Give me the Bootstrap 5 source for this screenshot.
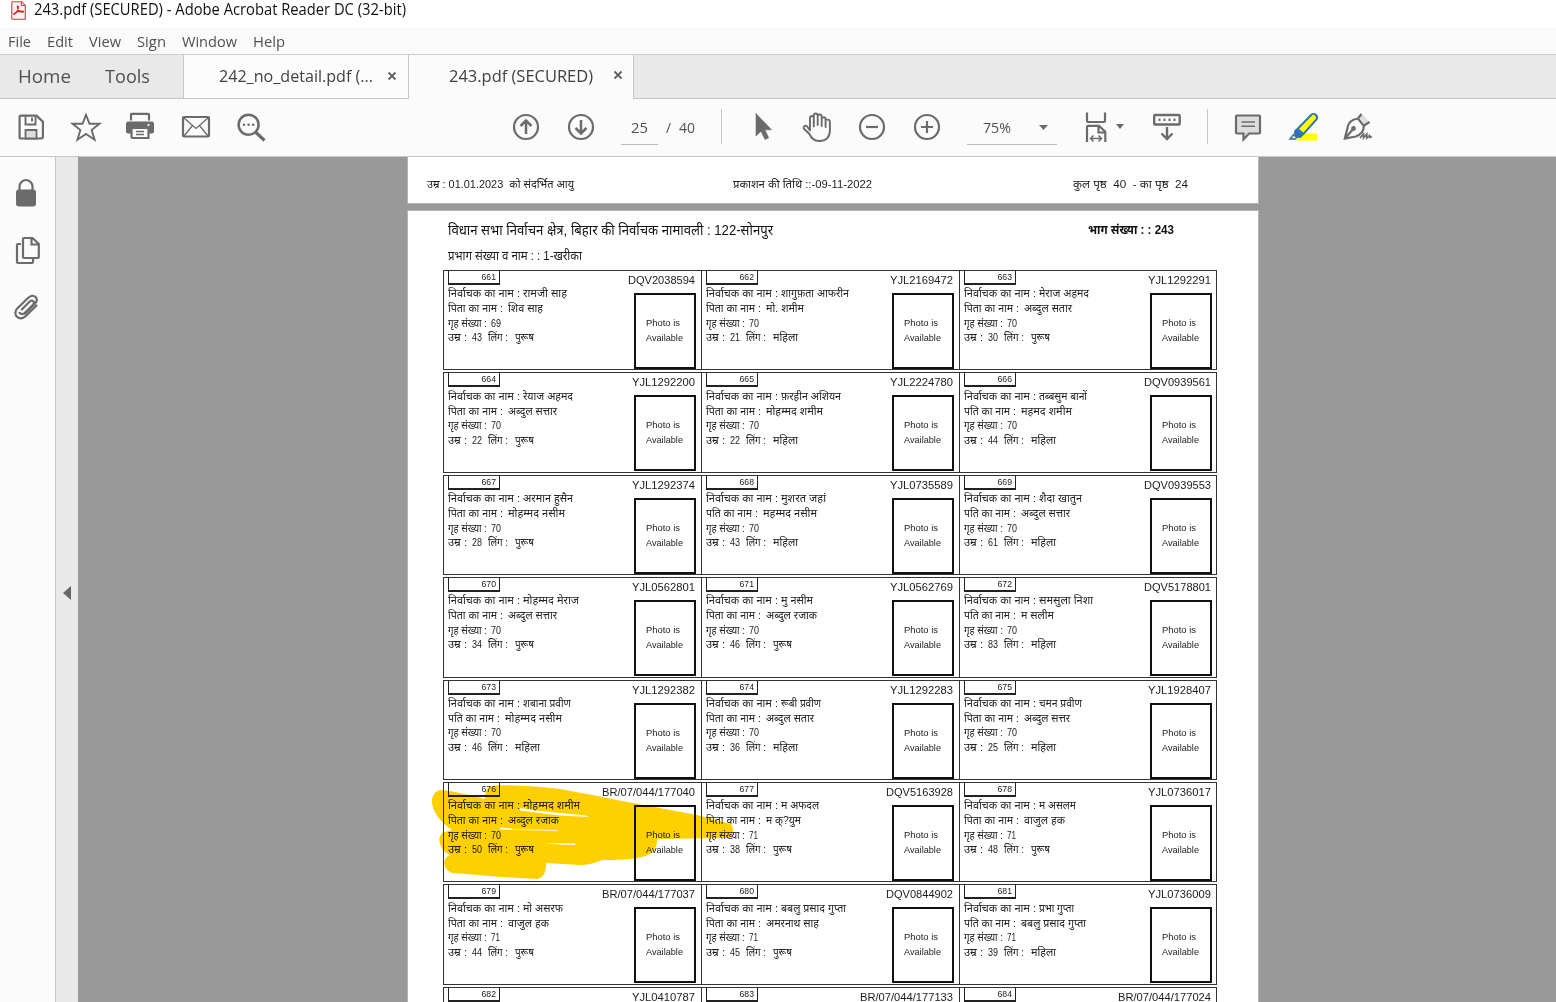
<!DOCTYPE html>
<html lang="hi">
<head>
<meta charset="utf-8">
<title>243.pdf (SECURED) - Adobe Acrobat Reader DC (32-bit)</title>
<link href="https://cdn.jsdelivr.net/npm/bootstrap@5.3.0/dist/css/bootstrap.min.css" rel="stylesheet">
<style>
html,body{height:100%;overflow:hidden}
body{font-family:"Open Sans","Noto Sans",sans-serif;background:#fff;color:#505050;line-height:1}
svg{display:block;overflow:visible;flex:none}
.fit{display:inline-block;white-space:pre;flex:none}
.fit>i{display:inline-block;font-style:normal;transform-origin:0 50%;white-space:pre}
.titlebar{height:28px;padding:0 0 8px 11px;color:#111;font-size:15.5px}
.titlebar .fit{margin-left:8px}
.menubar{height:27px;background:#fafafa;border-bottom:1px solid #cbcbcb;font-size:14px;padding:2px 0 0 8px}
.menubar .fit{margin-right:16px}
.tabstrip{height:44px;background:#e9e9e9;border-bottom:1px solid #c6c6c6}
.homes{width:183px;padding-left:18px;font-size:19px;gap:34px}
.doctab{width:225px;height:43px;background:#fcfcfc;border-right:1px solid #c6c6c6;font-size:16.5px;color:#404040}
.doctab.first{border-left:1px solid #c6c6c6;width:226px;padding-left:35px}
.doctab.current{height:44px;background:#fbfbfb;padding:0 0 2px 40px}
.doctab svg{margin:-2px 0 0 15px}
.doctab.current svg{margin-left:21px}
.toolbar{height:58px;background:#fbfbfb;border-bottom:1px solid #c6c6c6;padding:0 0 2px 17px;font-size:14px}
.tools{gap:27px}
.vline{width:1px;height:35px;background:#c6c6c6}
.field{height:35px;margin-top:1px;padding-top:2px;border-bottom:1px solid #bdbdbd}
#pager{margin-left:247px}
#pageno{margin-left:26px;width:37px;padding-left:10px}
#pagetotal{margin:3px 0 0 8px}
#rule1{margin-left:26px}
#nav2{margin-left:26px}
#zoomer{margin-left:26px;width:90px;padding-left:16px;gap:28px}
#fitter{margin-left:26px;gap:5px}
#keys{margin-left:29px}
#rule2{margin-left:26px}
#annot{margin-left:26px}
.siderail{width:56px;background:#fbfbfb;border-right:1px solid #c6c6c6;padding:21px 0 0 12px;gap:29px}
.collapser{width:22px;background:#e9e9e9}
.canvas{background:#999;padding-left:330px}
.sheet{width:850px;background:#fff;color:#1c1c1c;font-family:"Liberation Sans","Noto Sans","Noto Sans Devanagari",sans-serif;box-shadow:0 0 0 1px #b4b4b4}
.sheet.previous{height:46px;margin-bottom:8px;padding:22px 0 0 19px;font-size:11.5px}
.sheet.present{height:792px;padding:6px 0 0 35px}
.heading{height:25px;font-size:14px;padding:0 84px 0 5px;color:#111}
.heading b{font-size:12px}
.subheading{height:28px;font-size:12px;padding-left:5px}
.rolls{display:grid;grid-template-columns:259px 258px 257px;grid-auto-rows:100.4px;row-gap:2px}
.voter{border:1px solid #333;border-left:0}
.voter:nth-child(3n+1){border-left:1px solid #333}
.voter .serial{width:52px;height:14px;border:1px solid #222;border-top:0;border-bottom-width:2px;margin-left:4px;padding:2px 3px 0 0;text-align:right;font-size:8.7px;line-height:9px}
.voter .epic{font-size:11.8px;line-height:12px;padding:3px 6px 0 0}
.facts{margin-left:4px;font-size:10.5px;color:#222}
.facts>div{height:15px;display:flex;align-items:center}
.facts>div:nth-child(3){height:14px}
.photo{width:62px;height:76px;border:2px solid #111;margin-right:5px;margin-top:7px;font-size:9px;line-height:15px;padding:21px 0 0 10px}
.voter:nth-child(3n) .photo{margin-right:4px}
.voter:nth-child(3n) .epic{padding-right:5px}
.marker{position:absolute;left:0;top:0;mix-blend-mode:multiply;pointer-events:none}
</style>
<script src="https://cdn.jsdelivr.net/npm/bootstrap@5.3.0/dist/js/bootstrap.bundle.min.js"></script>
</head>
<body class="d-flex flex-column">
<header>
  <div class="titlebar d-flex align-items-center">
    <svg width="15" height="19" viewBox="0 0 15 19"><path d="M1.5.7h9l3.8 3.7v13.9H1.5Q.8 18.3.8 17.5V1.5Q.8.7 1.5.7zM10.4.7v3.8h3.8" fill="#fdf4f3" stroke="#c9403c" stroke-width="1.1"/><path d="M3.3 13.2c2-1 4-4.500 4-7.200 0-1-.9-1-.9 0 .1 3 2.500 5.200 5.300 5.200 1 0 1-1 0-1-3 0-6.300.8-8.300 2-.8.6-.6 1.300-.1 1z" fill="none" stroke="#c62c28" stroke-width="1.3"/></svg>
    <span class="fit" data-w="372">243.pdf (SECURED) - Adobe Acrobat Reader DC (32-bit)</span>
  </div>
  <nav class="menubar d-flex align-items-center">
    <span class="fit" data-w="23">File</span><span class="fit" data-w="26">Edit</span><span class="fit" data-w="32">View</span><span class="fit" data-w="29">Sign</span><span class="fit" data-w="55">Window</span><span class="fit" data-w="32">Help</span>
  </nav>
  <div class="tabstrip d-flex">
    <div class="homes d-flex align-items-center"><span class="fit" data-w="53">Home</span><span class="fit" data-w="45">Tools</span></div>
    <div class="doctab first d-flex align-items-center"><span class="fit" data-w="154">242_no_detail.pdf (...</span>
      <svg width="8" height="8"><path d="M.5.5l7 7M7.500.5l-7 7" stroke="#606060" stroke-width="1.8"/></svg></div>
    <div class="doctab current d-flex align-items-center"><span class="fit" data-w="144">243.pdf (SECURED)</span>
      <svg width="8" height="8"><path d="M.5.5l7 7M7.500.5l-7 7" stroke="#606060" stroke-width="1.8"/></svg></div>
  </div>
  <div class="toolbar d-flex align-items-center">
    <div class="tools d-flex">
      <svg width="28" height="28" fill="none" stroke="#6b6b6b" stroke-width="2.200"><path d="M4 2.600h15.500l6.400 6.200v14.700q0 2-2 2H4q-1.400 0-1.400-1.500V4q0-1.400 1.400-1.400z"/><path d="M8.500 3v8.500h10V3M15 4.500v4" stroke-width="1.900"/><path d="M8.500 25.500v-8.500h11v8.500z" fill="#ddd" stroke-width="1.800"/></svg>
      <svg width="28" height="28" fill="none" stroke="#6b6b6b" stroke-width="1.900"><path d="M14 1.800l3.500 9h10l-7.900 6.300 3 9.600L14 21l-8.600 5.700 3-9.600L.5 10.800h10z"/></svg>
      <svg width="28" height="28" viewBox="1 0 28 28"><path d="M5 7.500V1.500Q5 .8 6 .8h16q1 0 1 .8v5.900" fill="none" stroke="#6b6b6b" stroke-width="2.200"/><path d="M2 8.500h24q2 0 2 2v8q0 2-2 2H2q-2 0-2-2v-8q0-2 2-2z" fill="#6b6b6b"/><path d="M5.500 14.800h17v10.200H7q-1.500 0-1.500-1.500z" fill="#fbfbfb" stroke="#6b6b6b" stroke-width="2.200"/><path d="M10 18.500h8M10 21.500h8" stroke="#6b6b6b" stroke-width="1.300"/><circle cx="22.500" cy="12" r="1.200" fill="#ddd"/></svg>
      <svg width="28" height="28" fill="none" stroke="#6b6b6b" stroke-width="2.200"><rect x="1" y="4" width="26" height="19.500" rx="1"/><path d="M2 5l12 10.500L26 5M2 23l8.500-10.500M26 23l-8.500-10.500" stroke-width="1.300"/></svg>
      <svg width="28" height="28" fill="none" stroke="#6b6b6b"><circle cx="11.600" cy="11.800" r="10" stroke-width="2.500"/><path d="M19 19.500l8.500 8" stroke-width="3.200"/><g fill="#6b6b6b" stroke="none"><circle cx="7" cy="11.800" r="1.300"/><circle cx="11.600" cy="11.800" r="1.300"/><circle cx="16.200" cy="11.800" r="1.300"/></g></svg>
    </div>
    <div class="tools d-flex" id="pager">
      <svg width="28" height="28" fill="none" stroke="#6b6b6b" stroke-width="2.200"><circle cx="14" cy="14" r="12"/><path d="M14 21V8M8.500 13L14 7.500l5.500 5.500" stroke-width="2.500"/></svg>
      <svg width="28" height="28" fill="none" stroke="#6b6b6b" stroke-width="2.200"><circle cx="14" cy="14" r="12"/><path d="M14 7v13M8.500 15l5.500 5.500 5.500-5.500" stroke-width="2.500"/></svg>
    </div>
    <div class="field d-flex align-items-center" id="pageno"><span class="fit" data-w="17">25</span></div>
    <div id="pagetotal" class="d-flex"><span class="fit" data-w="5">/</span><span class="fit ms-2" data-w="16">40</span></div>
    <div class="vline" id="rule1"></div>
    <div class="tools d-flex" id="nav2">
      <svg width="28" height="28"><path d="M8 .5v22.500l5-4.700 4 8.200 3.700-1.700-3.800-8h6.600z" fill="#6b6b6b" stroke="#6b6b6b" stroke-width=".6"/></svg>
      <svg width="28" height="28" fill="none" stroke="#6b6b6b" stroke-width="1.900" stroke-linejoin="round" stroke-linecap="round"><path d="M7 16.500V5q0-2 1.900-2t1.900 2v8.500M10.800 12V2.500q0-2 1.900-2t2 2V12M14.700 3.500q0-2 2-2t2 2V13M18.700 6q.2-1.700 2-1.700t1.900 2L24.600 6.600q2.300 0 2.300 2.400V17c0 7-4 11-11 11-5 0-7.500-2.500-9.500-7L.8 15.500C0 13.500 2 12 4 13.200l3 4.300M22.600 6v8"/></svg>
      <svg width="28" height="28" fill="none" stroke="#6b6b6b" stroke-width="2.200"><circle cx="14" cy="14" r="12"/><path d="M8 14h12"/></svg>
      <svg width="28" height="28" fill="none" stroke="#6b6b6b" stroke-width="2.200"><circle cx="14" cy="14" r="12"/><path d="M8 14h12M14 8v12"/></svg>
    </div>
    <div class="field d-flex align-items-center" id="zoomer"><span class="fit" data-w="28">75%</span><svg width="9" height="5"><path d="M0 0h9L4.500 5z" fill="#6b6b6b"/></svg></div>
    <div class="d-flex align-items-center" id="fitter">
      <svg width="28" height="28" fill="none" stroke="#6b6b6b" stroke-width="2.200"><path d="M4 -.5v8.500q0 1 1 1h16q1 0 1-1V-.5M4 29V14q0-1.200 1.200-1.200H16l6.300 6V29M15.500 13v6.500H22"/><path d="M7.500 25.500h11M10.500 22.500l-3 3 3 3M15.500 22.500l3 3-3 3" stroke-width="1.500"/></svg>
      <svg width="8" height="5"><path d="M0 0h8L4 5z" fill="#6b6b6b"/></svg>
    </div>
    <svg id="keys" width="28" height="28" fill="none" stroke="#6b6b6b" stroke-width="2.400"><rect x="1.200" y="2" width="25.500" height="9.500" rx="1"/><path d="M5.500 6.800h18" stroke-dasharray="2 3"/><path d="M14 14v12M8.500 20.500l5.500 5.500 5.500-5.500"/></svg>
    <div class="vline" id="rule2"></div>
    <div class="tools d-flex" id="annot">
      <svg width="28" height="28"><path d="M3 2.500h22q1 0 1 1v16q0 1-1 1H15l-5.500 6v-6H3q-1 0-1-1v-16q0-1 1-1z" fill="#ddd" stroke="#6b6b6b" stroke-width="2.200"/><path d="M7.500 9h13.500M7.500 13.300h13.500" stroke="#6b6b6b" stroke-width="1.400"/></svg>
      <svg width="28" height="28"><path d="M11 20.500h17v7H7z" fill="#ff0"/><path d="M8.500 16L22.500 1.500Q25 0 27 2t.5 4.500L14.500 21z" fill="#ff0" stroke="#2b70b8" stroke-width="1.900"/><path d="M7 15.500l7.500 6.500-3 3-6-.5-.5-6z" fill="#2b70b8"/><path d="M4.500 21.500L.8 26h5.500l1.500-1.500z" fill="#dff06a" stroke="#2b70b8" stroke-width="1.300"/></svg>
      <svg width="28" height="28" fill="none" stroke="#6b6b6b" stroke-width="2.200"><path d="M15.500 4.500L19 2l6.500 7-4 3z" fill="#ddd" stroke="none"/><path d="M17.500 1l-3.500 4.500c-6 1-10 4-10.500 9.500L.8 25.500l11-2c5.500-2 8-6 8.200-11l5.500-3.500M13.500 5l6.500 8M1.300 25l7.500-8.500"/><circle cx="9.500" cy="15.500" r="1.300"/><path d="M16 25l3.500-4v4l3.300-4v4l2.700-2.500.5 2 1.800-1" stroke-width="1.700"/></svg>
    </div>
  </div>
</header>
<main class="d-flex flex-fill overflow-hidden">
  <aside class="siderail d-flex flex-column">
    <svg width="28" height="28"><rect x="4" y="11.500" width="20" height="17" rx="3" fill="#6b6b6b"/><path d="M7.500 12V8.500a6.500 6.500 0 0 1 13 0V12" fill="none" stroke="#6b6b6b" stroke-width="2.200"/></svg>
    <svg width="28" height="28" fill="none" stroke="#6b6b6b" stroke-width="2.200"><path d="M12 3h8.500l6.300 6V22q0 1-1 1H12q-1 0-1-1V4q0-1 1-1zM19.500 3v6.500h7"/><path d="M9 9H6q-1 0-1 1v17q0 1 1 1h14q1 0 1-1V23"/></svg>
    <svg width="28" height="28" fill="none" stroke="#6b6b6b" stroke-width="2.200" stroke-linecap="round"><path d="M9.800 17.500L18 9.300q1.800-1.400 3.200 0t0 3.200L13 20.800c-1.800 1.800-4 1.500-5.500 0"/><path d="M24.500 13.500L13.500 24.300c-3 3-6.500 2.500-8.500.5s-2.500-5.500.5-8.500L16 6c3-3 6-2.500 7.500-1s1.800 4-.5 6.500L13 21.500"/></svg>
  </aside>
  <div class="collapser d-flex align-items-center justify-content-center"><svg width="8" height="14"><path d="M8 0v14L0 7z" fill="#666" transform="translate(0 13)"/></svg></div>
  <div class="canvas flex-fill">
    <section class="sheet previous d-flex">
      <span class="fit" data-w="147" data-gap="159">उम्र : 01.01.2023  को संदर्भित आयु</span>
      <span class="fit" data-w="139" data-gap="201">प्रकाशन की तिथि ::-09-11-2022</span>
      <span class="fit" data-w="115">कुल पृष्ठ  40  - का पृष्ठ  24</span>
    </section>
    <section class="sheet present position-relative">
      <div class="heading d-flex justify-content-between align-items-center"><span class="fit" data-w="325">विधान सभा निर्वाचन क्षेत्र, बिहार की निर्वाचक नामावली : 122-सोनपुर</span><b class="fit" data-w="86">भाग संख्या : : 243</b></div>
      <div class="subheading d-flex align-items-center"><span class="fit" data-w="134">प्रभाग संख्या व नाम : : 1-खरीका</span></div>
      <div class="rolls" id="rolls"></div>
      <svg class="marker" width="850" height="792" viewBox="408 211 850 792"><path fill="#ffd000" fill-rule="evenodd" d="M442 790C452 791 470 795 485 799Q484 787 493 786C510 784 540 787 560 789C590 794 615 800 633 803L697 815L731 824Q736 832 730 838L657 839C657 848 654 854 642 857C630 860 612 860 603 860C594 863 588 865 580 865L546 863Q547 876 538 879C510 878 480 875 452 873C442 869 442 858 450 855C438 850 436 834 445 832L452 830C440 822 431 810 432 799Q434 790 442 790Z M520 808L540 811L586 815.500L588 817L560 815.500L520 810.500Z M500 827.500L512 828.500V829.500L530 829.500L556 830L559 831L500 829.500Z M544 843L575 843.500L575.500 845L560 844.500Z"/></svg>
    </section>
  </div>
</main>
<script>
const M='महिला',P='पुरूष',F='पिता',H='पति';
// serial, card id, name, name width, relation, relative, relative width, house, age, sex
const voters=[
[661,'DQV2038594','रामजी साह',44,F,'शिव साह',35,69,43,P],
[662,'YJL2169472','शागुफ़ता आफरीन',68,F,'मो. शमीम',38,70,21,M],
[663,'YJL1292291','मेराज अहमद',50,F,'अब्दुल सतार',48,70,30,P],
[664,'YJL1292200','रेयाज अहमद',50,F,'अब्दुल सत्तार',49,70,22,P],
[665,'YJL2224780','फ़रहीन अशियन',60,F,'मोहम्मद शमीम',57,70,22,M],
[666,'DQV0939561','तब्बसुम बानों',48,H,'महमद शमीम',51,70,44,M],
[667,'YJL1292374','अरमान हुसैन',50,F,'मोहम्मद नसीम',57,70,28,P],
[668,'YJL0735589','मुशरत जहां',45,H,'महम्मद नसीम',54,70,43,M],
[669,'DQV0939553','शैदा खातुन',43,H,'अब्दुल सत्तार',49,70,61,M],
[670,'YJL0562801','मोहम्मद मेराज',56,F,'अब्दुल सत्तार',49,70,34,P],
[671,'YJL0562769','मु नसीम',32,F,'अब्दुल रजाक',51,70,46,P],
[672,'DQV5178801','समसुला निशा',54,H,'म सलीम',33,70,83,M],
[673,'YJL1292382','शबाना प्रवीण',48,H,'मोहम्मद नसीम',57,70,46,M],
[674,'YJL1292283','रूबी प्रवीण',40,F,'अब्दुल सतार',48,70,36,M],
[675,'YJL1928407','चमन प्रवीण',43,F,'अब्दुल सत्तर',46,70,25,M],
[676,'BR/07/044/177040','मोहम्मद शमीम',57,F,'अब्दुल रजाक',51,70,50,P],
[677,'DQV5163928','म अफदल',38,F,'म क्\u200c?युम',35,71,38,P],
[678,'YJL0736017','म असलम',37,F,'वाजुल हक',41,71,48,P],
[679,'BR/07/044/177037','मो असरफ',40,F,'वाजुल हक',41,71,44,P],
[680,'DQV0844902','बबलु प्रसाद गुप्ता',65,F,'अमरनाथ साह',53,71,45,P],
[681,'YJL0736009','प्रभा गुप्ता',35,H,'बबलु प्रसाद गुप्ता',65,71,39,M],
[682,'YJL0410787'],
[683,'BR/07/044/177133'],
[684,'BR/07/044/177024']];
const f=(t,w,g=0)=>`<span class="fit" data-w="${w}" data-gap="${g}">${t}</span>`;
document.getElementById('rolls').innerHTML=voters.map(v=>`<article class="voter">
<div class="d-flex justify-content-between"><div class="serial">${v[0]}</div><div class="epic">${f(v[1],v[1][0]=='B'?93:v[1][0]=='D'?67:63)}</div></div>
${v[2]?`<div class="d-flex justify-content-between"><div class="facts">
<div>${f('निर्वाचक का नाम :',72,3)}${f(v[2],v[3])}</div>
<div>${f(v[4]+' का नाम :',v[4]==F?55:52,5)}${f(v[5],v[6])}</div>
<div>${f('गृह संख्या :',39,4)}${f(v[7],v[7]==71?9:10)}</div>
<div>${f('उम्र :',19,5)}${f(v[8],10,6)}${f('लिंग :',20,7)}${f(v[9],v[9]==M?25:19)}</div></div>
<div class="photo">${f('Photo is',34)}<br>${f('Available',37)}</div></div>`:''}</article>`).join('');
// squeeze or stretch every run to its typeset width
document.querySelectorAll('.fit').forEach(e=>{
  const i=document.createElement('i');i.append(...e.childNodes);e.append(i);
  const w=+e.dataset.w,n=i.getBoundingClientRect().width;
  i.style.transform=`scaleX(${w/n})`;i.style.marginRight=(w-n)+'px';
  e.style.width=w+'px';if(+e.dataset.gap)e.style.marginRight=e.dataset.gap+'px';
});
</script>
</body>
</html>
